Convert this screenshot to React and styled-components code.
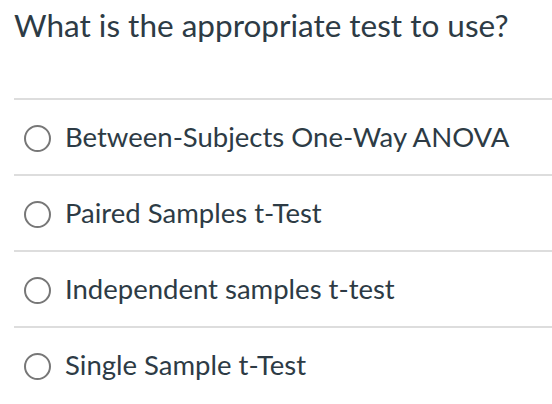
import React from "react";
import styled, { createGlobalStyle } from "styled-components";

const Global = createGlobalStyle`
  html, body { margin: 0; padding: 0; background: #fff; }
  body { font-family: Lato, "Noto Sans", sans-serif; color: #2d3b45; }
`;

const Page = styled.div`
  padding: 6px 0 0 14px;
`;

const Question = styled.h1`
  margin: 0 0 54px 0;
  font-size: 31.5px;
  font-weight: 400;
  line-height: 38px;
  color: #2d3b45;
`;

const List = styled.div`
  display: flex;
  flex-direction: column;
`;

const Row = styled.label`
  display: flex;
  align-items: center;
  gap: 14px;
  height: 74px;
  border-top: 2px solid #dddddd;
  padding-left: 10px;
  cursor: pointer;
`;

const Circle = styled.span`
  width: 23px;
  height: 23px;
  border: 2px solid #777777;
  border-radius: 50%;
  flex: none;
  margin-bottom: -2px;
`;

const Label = styled.span`
  font-size: 27.5px;
  line-height: 32px;
  color: #2d3b45;
`;

const options = [
  "Between-Subjects One-Way ANOVA",
  "Paired Samples t-Test",
  "Independent samples t-test",
  "Single Sample t-Test",
];

export default function App() {
  return (
    <Page>
      <Global />
      <Question>What is the appropriate test to use?</Question>
      <List>
        {options.map((o) => (
          <Row key={o}>
            <Circle />
            <Label>{o}</Label>
          </Row>
        ))}
      </List>
    </Page>
  );
}
